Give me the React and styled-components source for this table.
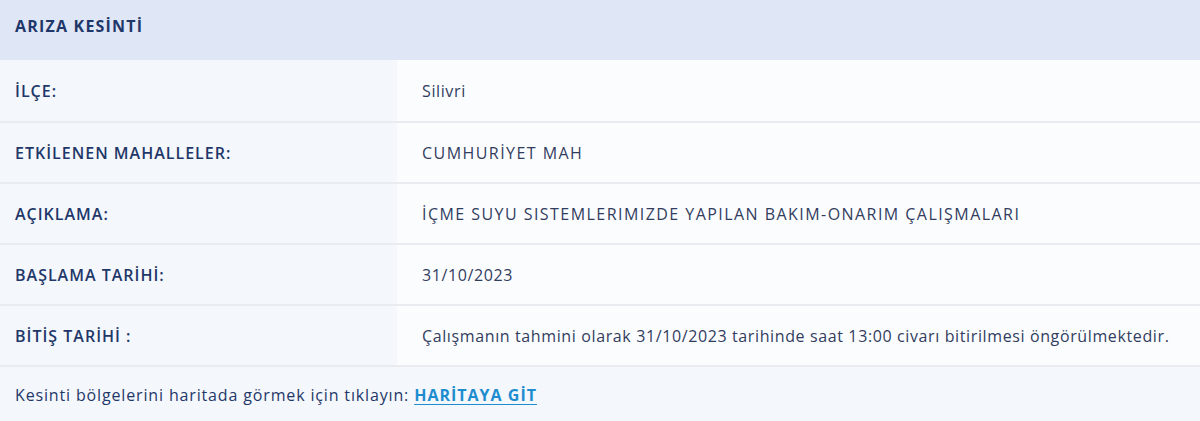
import * as React from 'react'
import styled, { createGlobalStyle } from 'styled-components'

const Global = createGlobalStyle`
  html, body {
    margin: 0;
    padding: 0;
    background: #f4f7fc;
  }
  body {
    font-family: "Open Sans", "Noto Sans", sans-serif;
  }
`

const Panel = styled.div`
  width: 1200px;
  background: #f4f7fc;
`

const Header = styled.div`
  height: 60px;
  box-sizing: border-box;
  display: flex;
  align-items: center;
  padding: 0 0 8px 15px;
  background: #dfe7f7;
  color: #1f3769;
  font-weight: 700;
  font-size: 16px;
  letter-spacing: 1.2px;
`

const Table = styled.div`
  display: flex;
  flex-direction: column;
`

const Row = styled.div`
  display: grid;
  grid-template-columns: 397px 1fr;
  height: 59px;
  border-bottom: 2px solid #e8ebf0;
  &:first-child {
    height: 61px;
  }
`

const Label = styled.div`
  display: flex;
  align-items: center;
  padding-left: 15px;
  background: #f4f7fc;
  color: #1f3769;
  font-weight: 600;
  font-size: 16px;
  letter-spacing: 1px;
`

const Value = styled.div`
  display: flex;
  align-items: center;
  padding-left: 25px;
  background: #fbfcfe;
  color: #323d5e;
  font-size: 16px;
  letter-spacing: ${p => (p.$caps ? '1.45px' : '0.62px')};
`

const Footer = styled.div`
  height: 56px;
  display: flex;
  align-items: center;
  padding-left: 15px;
  color: #1f3769;
  font-size: 16px;
  letter-spacing: 0.85px;
  gap: 5px;
`

const Link = styled.a`
  color: #1d8dd0;
  font-weight: 700;
  letter-spacing: 1px;
  text-decoration: underline;
  text-underline-offset: 3px;
`

const rows = [
  ['İLÇE:', 'Silivri'],
  ['ETKİLENEN MAHALLELER:', 'CUMHURİYET MAH', true],
  ['AÇIKLAMA:', 'İÇME SUYU SISTEMLERIMIZDE YAPILAN BAKIM-ONARIM ÇALIŞMALARI', true],
  ['BAŞLAMA TARİHİ:', '31/10/2023'],
  ['BİTİŞ TARİHİ :', 'Çalışmanın tahmini olarak 31/10/2023 tarihinde saat 13:00 civarı bitirilmesi öngörülmektedir.'],
]

export default function App() {
  return (
    <>
      <Global />
      <Panel>
        <Header>ARIZA KESİNTİ</Header>
        <Table>
          {rows.map(([label, value, caps]) => (
            <Row key={label}>
              <Label>{label}</Label>
              <Value $caps={caps}>{value}</Value>
            </Row>
          ))}
        </Table>
        <Footer>
          Kesinti bölgelerini haritada görmek için tıklayın:
          <Link href="#">HARİTAYA GİT</Link>
        </Footer>
      </Panel>
    </>
  )
}
